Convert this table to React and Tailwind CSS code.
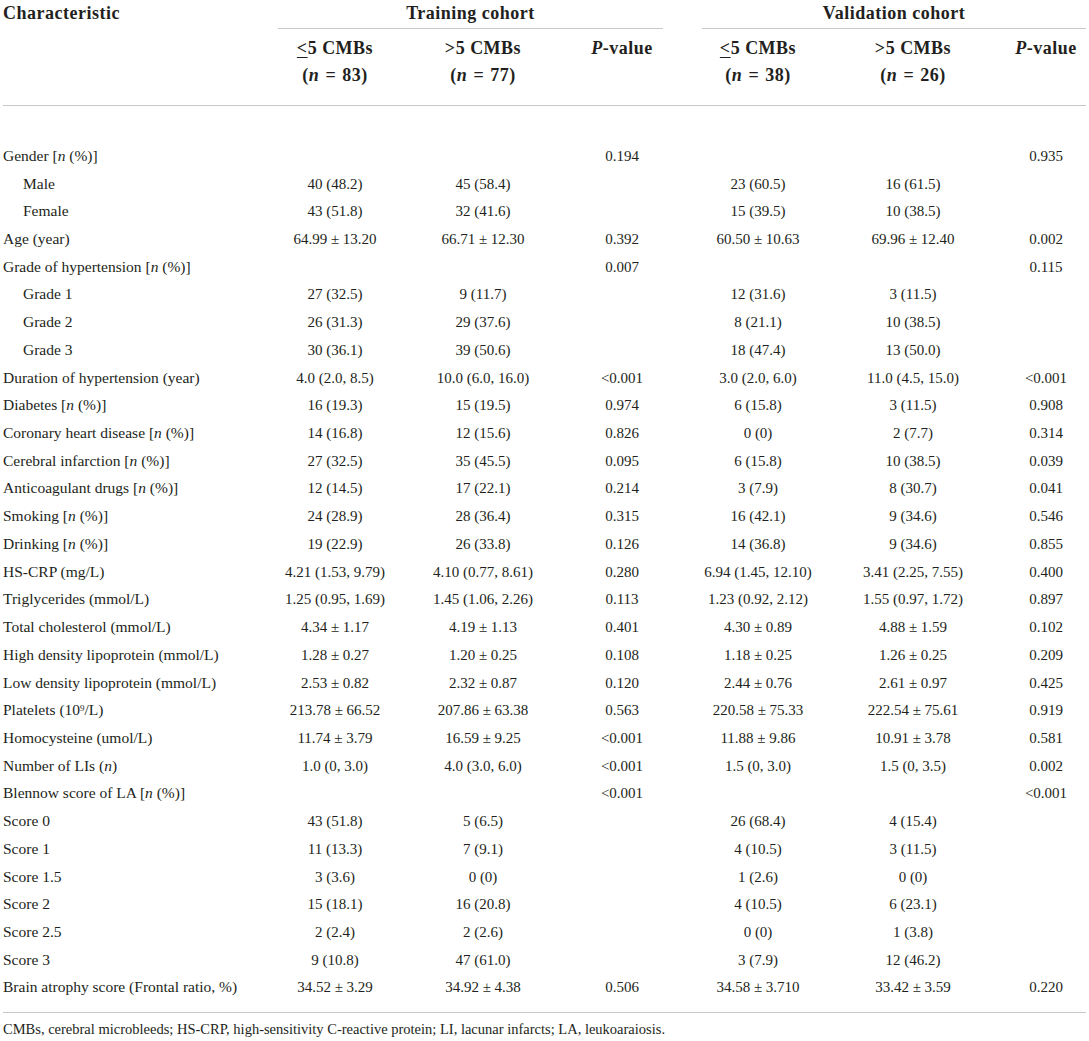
import React from 'react';

const cols = 'grid grid-cols-[267px_130px_166px_112px_160px_150px_98px]';

const N = () => <i>n</i>;
const NPct = () => (
  <>
    [<N /> (%)]
  </>
);

const rows = [
  { label: <>Gender <NPct /></>, p1: '0.194', p2: '0.935' },
  { label: 'Male', indent: true, v: ['40 (48.2)', '45 (58.4)', '23 (60.5)', '16 (61.5)'] },
  { label: 'Female', indent: true, v: ['43 (51.8)', '32 (41.6)', '15 (39.5)', '10 (38.5)'] },
  { label: 'Age (year)', v: ['64.99 ± 13.20', '66.71 ± 12.30', '60.50 ± 10.63', '69.96 ± 12.40'], p1: '0.392', p2: '0.002' },
  { label: <>Grade of hypertension <NPct /></>, p1: '0.007', p2: '0.115' },
  { label: 'Grade 1', indent: true, v: ['27 (32.5)', '9 (11.7)', '12 (31.6)', '3 (11.5)'] },
  { label: 'Grade 2', indent: true, v: ['26 (31.3)', '29 (37.6)', '8 (21.1)', '10 (38.5)'] },
  { label: 'Grade 3', indent: true, v: ['30 (36.1)', '39 (50.6)', '18 (47.4)', '13 (50.0)'] },
  { label: 'Duration of hypertension (year)', v: ['4.0 (2.0, 8.5)', '10.0 (6.0, 16.0)', '3.0 (2.0, 6.0)', '11.0 (4.5, 15.0)'], p1: '<0.001', p2: '<0.001' },
  { label: <>Diabetes <NPct /></>, v: ['16 (19.3)', '15 (19.5)', '6 (15.8)', '3 (11.5)'], p1: '0.974', p2: '0.908' },
  { label: <>Coronary heart disease <NPct /></>, v: ['14 (16.8)', '12 (15.6)', '0 (0)', '2 (7.7)'], p1: '0.826', p2: '0.314' },
  { label: <>Cerebral infarction <NPct /></>, v: ['27 (32.5)', '35 (45.5)', '6 (15.8)', '10 (38.5)'], p1: '0.095', p2: '0.039' },
  { label: <>Anticoagulant drugs <NPct /></>, v: ['12 (14.5)', '17 (22.1)', '3 (7.9)', '8 (30.7)'], p1: '0.214', p2: '0.041' },
  { label: <>Smoking <NPct /></>, v: ['24 (28.9)', '28 (36.4)', '16 (42.1)', '9 (34.6)'], p1: '0.315', p2: '0.546' },
  { label: <>Drinking <NPct /></>, v: ['19 (22.9)', '26 (33.8)', '14 (36.8)', '9 (34.6)'], p1: '0.126', p2: '0.855' },
  { label: 'HS-CRP (mg/L)', v: ['4.21 (1.53, 9.79)', '4.10 (0.77, 8.61)', '6.94 (1.45, 12.10)', '3.41 (2.25, 7.55)'], p1: '0.280', p2: '0.400' },
  { label: 'Triglycerides (mmol/L)', v: ['1.25 (0.95, 1.69)', '1.45 (1.06, 2.26)', '1.23 (0.92, 2.12)', '1.55 (0.97, 1.72)'], p1: '0.113', p2: '0.897' },
  { label: 'Total cholesterol (mmol/L)', v: ['4.34 ± 1.17', '4.19 ± 1.13', '4.30 ± 0.89', '4.88 ± 1.59'], p1: '0.401', p2: '0.102' },
  { label: 'High density lipoprotein (mmol/L)', v: ['1.28 ± 0.27', '1.20 ± 0.25', '1.18 ± 0.25', '1.26 ± 0.25'], p1: '0.108', p2: '0.209' },
  { label: 'Low density lipoprotein (mmol/L)', v: ['2.53 ± 0.82', '2.32 ± 0.87', '2.44 ± 0.76', '2.61 ± 0.97'], p1: '0.120', p2: '0.425' },
  { label: <>Platelets (10<sup className="text-[9px]">9</sup>/L)</>, v: ['213.78 ± 66.52', '207.86 ± 63.38', '220.58 ± 75.33', '222.54 ± 75.61'], p1: '0.563', p2: '0.919' },
  { label: 'Homocysteine (umol/L)', v: ['11.74 ± 3.79', '16.59 ± 9.25', '11.88 ± 9.86', '10.91 ± 3.78'], p1: '<0.001', p2: '0.581' },
  { label: <>Number of LIs (<N />)</>, v: ['1.0 (0, 3.0)', '4.0 (3.0, 6.0)', '1.5 (0, 3.0)', '1.5 (0, 3.5)'], p1: '<0.001', p2: '0.002' },
  { label: <>Blennow score of LA <NPct /></>, p1: '<0.001', p2: '<0.001' },
  { label: 'Score 0', v: ['43 (51.8)', '5 (6.5)', '26 (68.4)', '4 (15.4)'] },
  { label: 'Score 1', v: ['11 (13.3)', '7 (9.1)', '4 (10.5)', '3 (11.5)'] },
  { label: 'Score 1.5', v: ['3 (3.6)', '0 (0)', '1 (2.6)', '0 (0)'] },
  { label: 'Score 2', v: ['15 (18.1)', '16 (20.8)', '4 (10.5)', '6 (23.1)'] },
  { label: 'Score 2.5', v: ['2 (2.4)', '2 (2.6)', '0 (0)', '1 (3.8)'] },
  { label: 'Score 3', v: ['9 (10.8)', '47 (61.0)', '3 (7.9)', '12 (46.2)'] },
  { label: 'Brain atrophy score (Frontal ratio, %)', v: ['34.52 ± 3.29', '34.92 ± 4.38', '34.58 ± 3.710', '33.42 ± 3.59'], p1: '0.506', p2: '0.220' },
];

function GroupHead({ lt, n }) {
  return (
    <div className="text-center font-bold">
      <div>
        {lt ? <span className="underline underline-offset-[3px]">&lt;</span> : '>'}5 CMBs
      </div>
      <div>
        (<i>n</i> <span className="mx-[1px]">=</span> {n})
      </div>
    </div>
  );
}

export default function App() {
  return (
    <div
      className="min-h-[1041px] bg-white px-[3px] text-[#231f20]"
      style={{ fontFamily: '"Liberation Serif", "Times New Roman", serif' }}>
      {/* header */}
      <div className="border-b border-[#c8c8c8] text-[18px] tracking-[0.5px]">
        <div className={`${cols} h-[29px] leading-[20px]`}>
          <div className="pt-[3px] font-bold">Characteristic</div>
          <div className="col-span-3 ml-[8px] mr-[15px] border-b border-[#c8c8c8] pt-[3px] text-center font-bold">
            Training cohort
          </div>
          <div className="col-span-3 ml-[24px] border-b border-[#c8c8c8] pt-[3px] text-center font-bold">
            Validation cohort
          </div>
        </div>
        <div className={`${cols} h-[76px] pt-[6px] leading-[27px]`}>
          <div />
          <GroupHead lt n={83} />
          <GroupHead n={77} />
          <div className="text-center font-bold">
            <i>P</i>-value
          </div>
          <GroupHead lt n={38} />
          <GroupHead n={26} />
          <div className="pl-[18px] text-center font-bold">
            <i>P</i>-value
          </div>
        </div>
      </div>

      {/* body */}
      <div className="border-b border-[#c8c8c8] pb-[11px] pt-[36px] text-[15px]">
        {rows.map((r, i) => {
          const v = r.v || ['', '', '', ''];
          return (
            <div key={i} className={`${cols} h-[27.73px] items-center leading-[20px]`}>
              <div className={`text-[15.5px] ${r.indent ? 'pl-[20px]' : ''}`}>{r.label}</div>
              <div className="text-center">{v[0]}</div>
              <div className="text-center">{v[1]}</div>
              <div className="text-center">{r.p1 || ''}</div>
              <div className="text-center">{v[2]}</div>
              <div className="text-center">{v[3]}</div>
              <div className="pl-[18px] text-center">{r.p2 || ''}</div>
            </div>
          );
        })}
      </div>

      <p className="mt-[7px] text-[14.5px] leading-[18px]">
        CMBs, cerebral microbleeds; HS-CRP, high-sensitivity C-reactive protein; LI, lacunar infarcts; LA, leukoaraiosis.
      </p>
    </div>
  );
}
